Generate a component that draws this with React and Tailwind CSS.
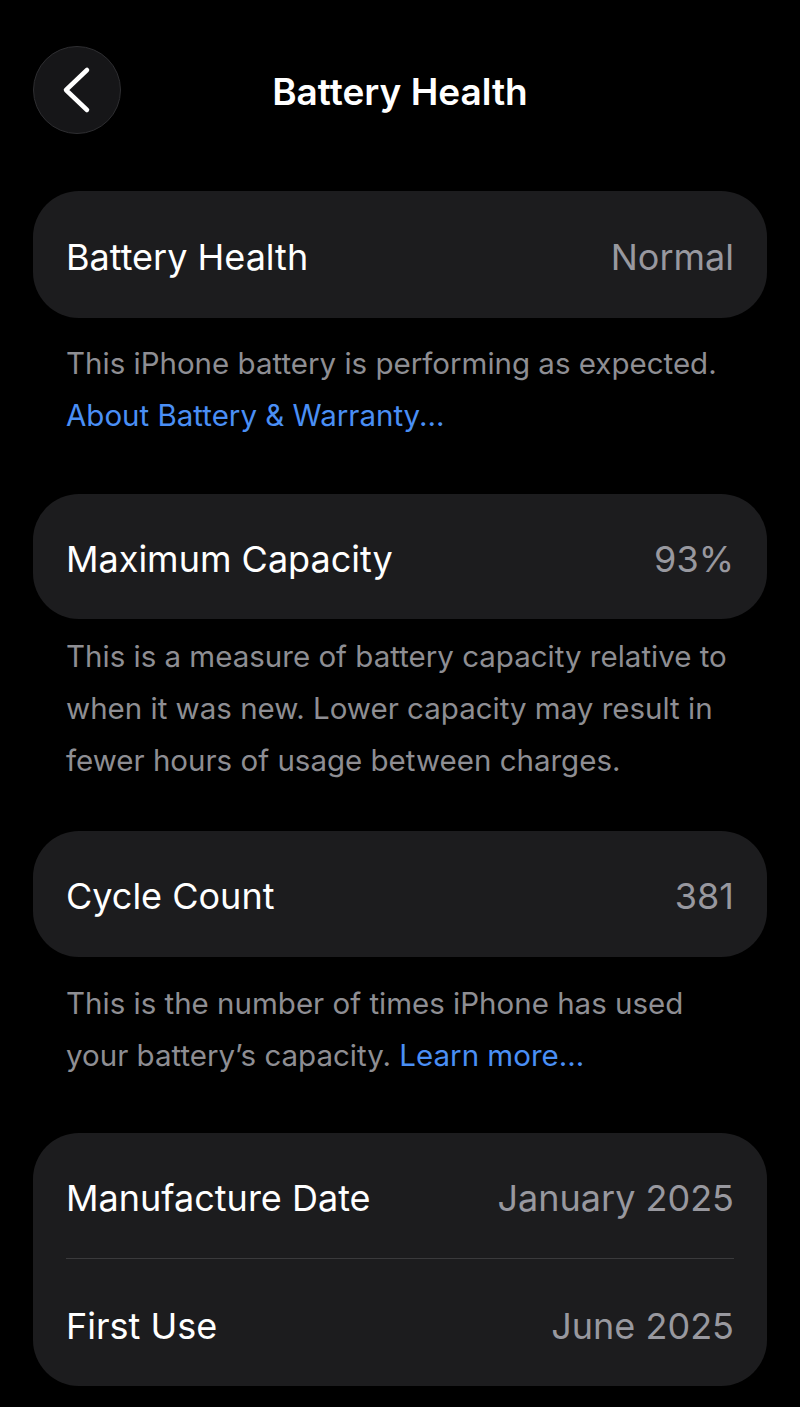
import React from "react";

const font = { fontFamily: "Inter, 'Noto Sans', sans-serif" };

// single label/value row inside a rounded card
const Row = ({ label, value, className = "" }) => (
  <div className={`flex items-center justify-between px-[33px] pt-[4px] ${className}`}>
    <span className="text-[36px] text-white">{label}</span>
    <span className="text-[36px] text-[#98989f]">{value}</span>
  </div>
);

const Note = ({ children, className = "" }) => (
  <p className={`px-[66px] text-[29.5px] leading-[52px] text-[#8e8e93] ${className}`}>
    {children}
  </p>
);

const App = () => {
  return (
    <div className="min-h-[1407px] w-full bg-black" style={font}>
      {/* Header */}
      <div className="relative flex h-[180px] items-start pt-[46px] px-[33px]">
        <button className="flex h-[88px] w-[88px] items-center justify-center rounded-full border border-[#2e2e31] bg-[#161618]">
          <svg width="40" height="48" viewBox="0 0 40 48" fill="none">
            <path
              d="M30 4 L9 24 L30 44"
              stroke="white"
              strokeWidth="4.5"
              strokeLinecap="round"
              strokeLinejoin="round"
            />
          </svg>
        </button>
        <h1 className="absolute left-0 right-0 top-[67px] text-center text-[37px] font-semibold leading-[50px] text-white">
          Battery Health
        </h1>
      </div>

      <div className="px-[33px] mt-[11px]">
        <div className="h-[127px] rounded-[46px] bg-[#1c1c1e] flex flex-col justify-center">
          <Row label="Battery Health" value="Normal" />
        </div>
      </div>
      <Note className="mt-[19px]">
        This iPhone battery is performing as expected.
        <br />
        <span className="text-[#4a8ff5]">About Battery &amp; Warranty...</span>
      </Note>

      <div className="px-[33px] mt-[53px]">
        <div className="h-[125px] rounded-[46px] bg-[#1c1c1e] flex flex-col justify-center">
          <Row label="Maximum Capacity" value="93%" />
        </div>
      </div>
      <Note className="mt-[11px]">
        This is a measure of battery capacity relative to when it was new.
        Lower capacity may result in fewer hours of usage between charges.
      </Note>

      <div className="px-[33px] mt-[45px]">
        <div className="h-[126px] rounded-[46px] bg-[#1c1c1e] flex flex-col justify-center">
          <Row label="Cycle Count" value="381" />
        </div>
      </div>
      <Note className="mt-[20px]">
        This is the number of times iPhone has used your battery’s capacity.{" "}
        <span className="text-[#4a8ff5]">Learn more...</span>
      </Note>

      <div className="px-[33px] mt-[52px] pb-[21px]">
        <div className="rounded-[46px] bg-[#1c1c1e]">
          <Row label="Manufacture Date" value="January 2025" className="h-[125px]" />
          <div className="mx-[33px] h-px bg-[#3a3a3c]" />
          <Row label="First Use" value="June 2025" className="h-[127px] pt-[7px]" />
        </div>
      </div>
    </div>
  );
};

export default App;
